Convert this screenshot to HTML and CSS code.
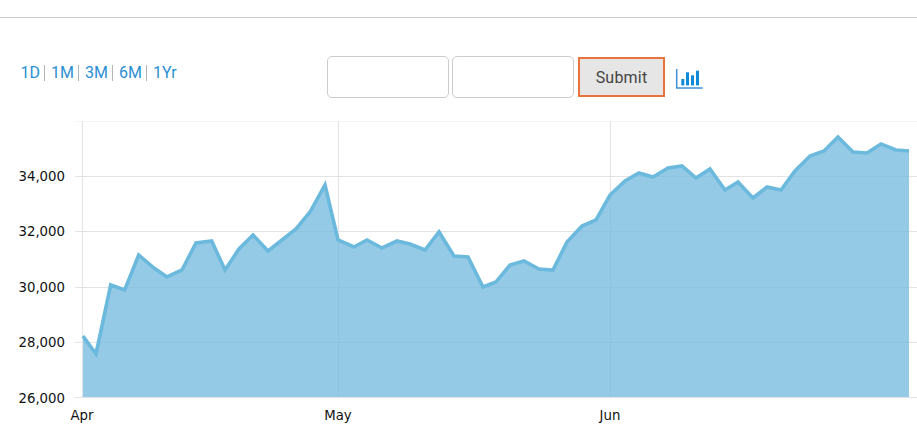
FILE: index.html
```html
<!DOCTYPE html>
<html lang="en">
<head>
<meta charset="utf-8">
<title>Chart</title>
<link rel="stylesheet" href="styles.css">
</head>
<body>
<div class="rule"></div>
<div class="toolbar">
  <nav class="ranges">
    <a class="range">1D</a><a class="range">1M</a><a class="range">3M</a><a class="range">6M</a><a class="range last">1Yr</a>
  </nav>
  <form class="dates">
    <input class="date" type="text"><input class="date" type="text">
    <button class="submit" type="button">Submit</button>
    <svg class="bars" width="28" height="22" viewBox="0 0 28 22">
      <path d="M1.700 2V21H27.700" class="axis"/>
      <rect x="6.300" y="12" width="3" height="6.400" class="bar"/>
      <rect x="11" y="5.300" width="3" height="13.100" class="bar"/>
      <rect x="16" y="8.300" width="3" height="10.100" class="bar"/>
      <rect x="21" y="3.700" width="3" height="14.700" class="bar"/>
    </svg>
  </form>
</div>
<svg class="chart" width="917" height="329" viewBox="0 110 917 329">
  <path class="grid-top" d="M75 121.500H917"/>
  <path class="grid" d="M75 176.500H917M75 231.500H917M75 287.500H917M75 342.500H917M75 397.500H917M82.500 121V397M338.500 121V397M610.500 121V397"/>
  <polygon class="area" points="83,336 96,354 110.700,285 124.700,290 138.700,255 154,268 167,277 182,270 196,243 211.700,241 225,270 239,249 253,235 268,251 282,240 296,229 310,212 325,185 338,240 354,247 367,240 382,248 397,241 410,244 425,250 439,232 454,256 468,257 483,287 496,282 510,265 524,261 539,269 553,270 567,242 582,226 596,220 610,195 625,181 639,173 653,177 668,168 682,166 696,178 710,169 725,190 738,182 753,198 767,187 781,190 795,171 810,156 824,151 838,137 853,152 867,153 881,144 896,150 909,151 909,397 83,397"/>
  <polyline class="line" points="83,336 96,354 110.700,285 124.700,290 138.700,255 154,268 167,277 182,270 196,243 211.700,241 225,270 239,249 253,235 268,251 282,240 296,229 310,212 325,185 338,240 354,247 367,240 382,248 397,241 410,244 425,250 439,232 454,256 468,257 483,287 496,282 510,265 524,261 539,269 553,270 567,242 582,226 596,220 610,195 625,181 639,173 653,177 668,168 682,166 696,178 710,169 725,190 738,182 753,198 767,187 781,190 795,171 810,156 824,151 838,137 853,152 867,153 881,144 896,150 909,151"/>
  <g class="ylabels">
    <text x="65" y="181">34,000</text>
    <text x="65" y="236">32,000</text>
    <text x="65" y="292">30,000</text>
    <text x="65" y="347">28,000</text>
    <text x="65" y="403">26,000</text>
  </g>
  <g class="xlabels">
    <text x="82" y="420">Apr</text>
    <text x="338" y="420">May</text>
    <text x="610" y="420">Jun</text>
  </g>
</svg>
</body>
</html>
```
FILE: styles.css
```css
html, body { margin: 0; padding: 0; background: #fff; }
body { width: 917px; height: 439px; overflow: hidden; font-family: Roboto, "Liberation Sans", sans-serif; }
.rule { height: 1px; margin-top: 17px; background: #ccc; }
.toolbar { display: flex; align-items: flex-start; height: 92px; padding-left: 20.500px; }
.ranges { display: flex; width: 156px; margin-top: 47px; }
.range { display: block; height: 16px; line-height: 16px; padding-right: 4px; margin-right: 6px; border-right: 1px solid #b5b5b5; color: #2a8fd2; font-size: 16px; font-weight: 400; }
.range.last { border-right: 0; padding-right: 0; margin-right: 0; }
.dates { display: flex; align-items: flex-start; margin-left: 150.500px; margin-top: 38px; }
.date { box-sizing: border-box; width: 122px; height: 42px; margin: 0 3px 0 0; padding: 0; background: #fff; border: 1px solid #ccc; border-radius: 5px; }
.submit { box-sizing: border-box; width: 87px; height: 40px; margin: 1px 10px 0 1px; padding: 0; background: #e6e6e6; border: 2px solid #e8743b; border-radius: 0; color: #444; font-family: Roboto, "Liberation Sans", sans-serif; font-size: 16px; letter-spacing: 0.2px; }
.bars { margin-top: 11px; }
.axis { fill: none; stroke: #3f8fd6; stroke-width: 1.500; }
.bar { fill: #0f8ad8; }
.chart { display: block; }
.grid { fill: none; stroke: #e3e3e3; stroke-width: 1; }
.grid-top { fill: none; stroke: #f5f5f5; stroke-width: 1; }
.area { fill: #77bbdf; fill-opacity: 0.78; }
.line { fill: none; stroke: #6cb9de; stroke-width: 3.600; stroke-linejoin: miter; }
.ylabels text { font-family: "DejaVu Sans", sans-serif; font-size: 13.300px; text-anchor: end; fill: #111; }
.xlabels text { font-family: "DejaVu Sans", sans-serif; font-size: 13.300px; text-anchor: middle; fill: #111; }
```
